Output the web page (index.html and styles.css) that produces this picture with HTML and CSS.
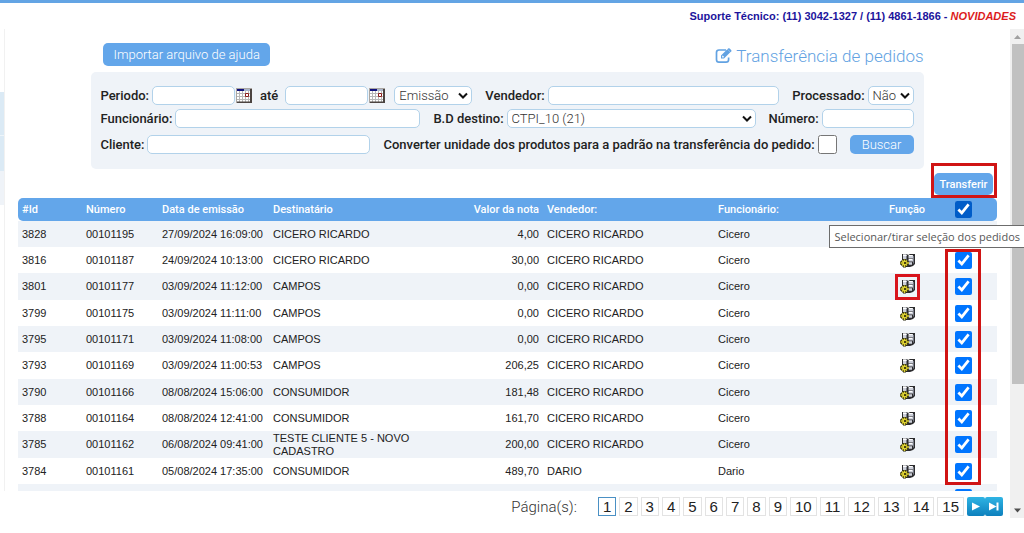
FILE: index.html
```html
<!DOCTYPE html>
<html lang="pt-BR">
<head>
<meta charset="utf-8">
<title>Transferência de pedidos</title>
<link rel="stylesheet" href="styles.css">
</head>
<body>
<svg class="sprite" aria-hidden="true">
  <symbol id="i-cal" viewBox="0 0 16 15">
    <path fill="#fff" d="M0 0h16v15H0z"/>
    <path fill="#aaa6a2" d="M0 0h1v15H0zM0 0h16v1H0z"/>
    <path fill="#10107c" d="M1 1h7v2H1z"/>
    <path fill="#a9b4c8" d="M8 1h6v2H8z"/>
    <path stroke="#b8b8b8" fill="none" d="M1 5.500h13M1 8.500h13M1 11.500h13M3.500 3v11M6.500 3v11M9.500 3v11M12.500 3v11"/>
    <path stroke="#8c1c1c" fill="#fff" d="M9.500 5.500h3v3h-3z"/>
    <path fill="#4b4441" d="M14 1h2v14H1v-1.500h13z"/>
  </symbol>
  <symbol id="i-fn" viewBox="0 0 15 15">
    <path fill="#2c2c2e" d="M2 1h5l1 1 2-1h5v10l-2 2-3 1H5L2 9z"/>
    <path fill="#cdd0da" d="M3 1.500h4V7H3zM8.500 2H13v3.500H8.500zM8.500 6H13v2.500H8.500zM8.500 9.200H12v2.500H8.500z"/>
    <path fill="#fff" d="M3 1.500h3v1.500H3zM9 2h3.500v1H9zM9 6h3v1H9z"/>
    <path fill="#777b86" d="M13 3h1v7l-1 1zM6 3h1v4H6z"/>
    <path stroke="#2a2810" stroke-width="3" d="M4.500 6v8.500M0 10h9M1.800 7.200l5.500 5.500M7.200 7.200l-5.500 5.500"/>
    <path stroke="#e0d432" stroke-width="1.500" d="M4.500 6.500v7.500M.5 10h8.500M2 7.500l5 5M7 7.500l-5 5"/>
    <path fill="#4a430c" d="M4 9h2v2H4z"/>
  </symbol>
</svg>

<header class="topbar">
  <strong>Suporte Técnico: (11) 3042-1327 / (11) 4861-1866 - <a class="news" href="#">NOVIDADES</a></strong>
</header>

<div class="shell">
  <aside class="rail"><div class="rail-a"></div><div class="rail-b"></div><div class="rail-c"></div></aside>

  <div class="center">
    <main class="content">
      <div class="panel-area">
        <div class="heading">
          <button class="btn btn-import" type="button">Importar arquivo de ajuda</button>
          <h1 class="title">
            <svg class="edit" viewBox="0 0 18 16" aria-hidden="true">
              <path fill="none" stroke="currentColor" stroke-width="1.700" d="M11 2H4Q1.500 2 1.500 4.500v7Q1.500 14.200 4 14.200h7q2.600 0 2.600-2.700V9.500"/>
              <path fill="currentColor" fill-rule="evenodd" d="M6 7.500 12.300 1.200l3 3L9 10.500H6zM7.200 8v1.400h1.300l.5-.6L7.700 7.500zM13 .6q.8-.9 1.700 0l1.400 1.400q.8.800 0 1.700l-.5.500-3-3z"/>
            </svg>Transferência de pedidos
          </h1>
        </div>

        <form class="filters">
          <div class="line">
            <div class="field">
              <label for="de">Periodo:</label><input class="box date" id="de" type="text">
              <button class="cal" type="button" aria-label="Data inicial"><svg><use href="#i-cal"/></svg></button>
            </div>
            <div class="field until">
              <label for="ate">até</label><input class="box date" id="ate" type="text">
              <button class="cal" type="button" aria-label="Data final"><svg><use href="#i-cal"/></svg></button>
            </div>
            <span class="pick pick-tipo"><select class="box" aria-label="Tipo de data"><option>Emissão</option></select><svg class="chev" viewBox="0 0 10 6"><path d="M1 1l4 4 4-4"/></svg></span>
            <div class="field grow"><label for="vend">Vendedor:</label><input class="box" id="vend" type="text"></div>
            <div class="field"><label for="proc">Processado:</label><span class="pick pick-proc"><select class="box" id="proc"><option>Não</option></select><svg class="chev" viewBox="0 0 10 6"><path d="M1 1l4 4 4-4"/></svg></span></div>
          </div>
          <div class="line">
            <div class="field grow"><label for="func">Funcionário:</label><input class="box" id="func" type="text"></div>
            <div class="field"><label for="bd">B.D destino:</label><span class="pick pick-bd"><select class="box" id="bd"><option>CTPI_10 (21)</option></select><svg class="chev" viewBox="0 0 10 6"><path d="M1 1l4 4 4-4"/></svg></span></div>
            <div class="field"><label for="num">Número:</label><input class="box num" id="num" type="text"></div>
          </div>
          <div class="line">
            <div class="field grow"><label for="cli">Cliente:</label><input class="box" id="cli" type="text"></div>
            <div class="field"><label for="conv">Converter unidade dos produtos para a padrão na transferência do pedido:</label><input class="conv" id="conv" type="checkbox"></div>
            <button class="btn btn-search" type="button">Buscar</button>
          </div>
        </form>
      </div>

      <div class="actions"><div class="mark-frame"><button class="btn btn-transfer" type="button">Transferir</button></div></div>

      <div class="list">
        <table class="orders">
          <colgroup><col class="c-id"><col class="c-num"><col class="c-date"><col><col class="c-val"><col class="c-vend"><col class="c-func"><col class="c-fn"><col class="c-chk"></colgroup>
          <thead>
            <tr><th>#Id</th><th>Número</th><th>Data de emissão</th><th>Destinatário</th><th class="right">Valor da nota</th><th>Vendedor:</th><th>Funcionário:</th><th class="mid">Função</th><th class="mid"><input class="chk all" type="checkbox" checked aria-label="Selecionar todos"></th></tr>
          </thead>
          <tbody>
            <tr><td>3828</td><td>00101195</td><td>27/09/2024 16:09:00</td><td>CICERO RICARDO</td><td class="right">4,00</td><td>CICERO RICARDO</td><td>Cicero</td><td class="mid"><button class="fn" type="button" aria-label="Função"><svg><use href="#i-fn"/></svg></button></td><td class="mid"><input class="chk" type="checkbox" checked aria-label="Pedido 3828"></td></tr>
            <tr><td>3816</td><td>00101187</td><td>24/09/2024 10:13:00</td><td>CICERO RICARDO</td><td class="right">30,00</td><td>CICERO RICARDO</td><td>Cicero</td><td class="mid"><button class="fn" type="button" aria-label="Função"><svg><use href="#i-fn"/></svg></button></td><td class="mid"><input class="chk" type="checkbox" checked aria-label="Pedido 3816"></td></tr>
            <tr><td>3801</td><td>00101177</td><td>03/09/2024 11:12:00</td><td>CAMPOS</td><td class="right">0,00</td><td>CICERO RICARDO</td><td>Cicero</td><td class="mid"><button class="fn fn-marked" type="button" aria-label="Função"><svg><use href="#i-fn"/></svg></button></td><td class="mid"><input class="chk" type="checkbox" checked aria-label="Pedido 3801"></td></tr>
            <tr><td>3799</td><td>00101175</td><td>03/09/2024 11:11:00</td><td>CAMPOS</td><td class="right">0,00</td><td>CICERO RICARDO</td><td>Cicero</td><td class="mid"><button class="fn" type="button" aria-label="Função"><svg><use href="#i-fn"/></svg></button></td><td class="mid"><input class="chk" type="checkbox" checked aria-label="Pedido 3799"></td></tr>
            <tr><td>3795</td><td>00101171</td><td>03/09/2024 11:08:00</td><td>CAMPOS</td><td class="right">0,00</td><td>CICERO RICARDO</td><td>Cicero</td><td class="mid"><button class="fn" type="button" aria-label="Função"><svg><use href="#i-fn"/></svg></button></td><td class="mid"><input class="chk" type="checkbox" checked aria-label="Pedido 3795"></td></tr>
            <tr><td>3793</td><td>00101169</td><td>03/09/2024 11:00:53</td><td>CAMPOS</td><td class="right">206,25</td><td>CICERO RICARDO</td><td>Cicero</td><td class="mid"><button class="fn" type="button" aria-label="Função"><svg><use href="#i-fn"/></svg></button></td><td class="mid"><input class="chk" type="checkbox" checked aria-label="Pedido 3793"></td></tr>
            <tr><td>3790</td><td>00101166</td><td>08/08/2024 15:06:00</td><td>CONSUMIDOR</td><td class="right">181,48</td><td>CICERO RICARDO</td><td>Cicero</td><td class="mid"><button class="fn" type="button" aria-label="Função"><svg><use href="#i-fn"/></svg></button></td><td class="mid"><input class="chk" type="checkbox" checked aria-label="Pedido 3790"></td></tr>
            <tr><td>3788</td><td>00101164</td><td>08/08/2024 12:41:00</td><td>CONSUMIDOR</td><td class="right">161,70</td><td>CICERO RICARDO</td><td>Cicero</td><td class="mid"><button class="fn" type="button" aria-label="Função"><svg><use href="#i-fn"/></svg></button></td><td class="mid"><input class="chk" type="checkbox" checked aria-label="Pedido 3788"></td></tr>
            <tr><td>3785</td><td>00101162</td><td>06/08/2024 09:41:00</td><td>TESTE CLIENTE 5 - NOVO CADASTRO</td><td class="right">200,00</td><td>CICERO RICARDO</td><td>Cicero</td><td class="mid"><button class="fn" type="button" aria-label="Função"><svg><use href="#i-fn"/></svg></button></td><td class="mid"><input class="chk" type="checkbox" checked aria-label="Pedido 3785"></td></tr>
            <tr><td>3784</td><td>00101161</td><td>05/08/2024 17:35:00</td><td>CONSUMIDOR</td><td class="right">489,70</td><td>DARIO</td><td>Dario</td><td class="mid"><button class="fn" type="button" aria-label="Função"><svg><use href="#i-fn"/></svg></button></td><td class="mid"><input class="chk" type="checkbox" checked aria-label="Pedido 3784"></td></tr>
            <tr><td></td><td></td><td></td><td></td><td></td><td></td><td></td><td class="mid"><button class="fn" type="button" aria-label="Função"><svg><use href="#i-fn"/></svg></button></td><td class="mid"><input class="chk" type="checkbox" checked aria-label="Próximo pedido"></td></tr>
          </tbody>
        </table>
        <div class="mark-column"></div>
        <div class="tip" role="tooltip">Selecionar/tirar seleção dos pedidos</div>
      </div>
    </main>

    <nav class="pager" aria-label="Páginas">
      <span class="pager-label">Página(s):</span>
      <a class="page current" href="#">1</a><a class="page" href="#">2</a><a class="page" href="#">3</a><a class="page" href="#">4</a><a class="page" href="#">5</a><a class="page" href="#">6</a><a class="page" href="#">7</a><a class="page" href="#">8</a><a class="page" href="#">9</a><a class="page" href="#">10</a><a class="page" href="#">11</a><a class="page" href="#">12</a><a class="page" href="#">13</a><a class="page" href="#">14</a><a class="page" href="#">15</a>
      <span class="jumps">
        <a class="jump" href="#" aria-label="Próxima"><svg viewBox="0 0 18 19"><path d="M5 5.500l8 4-8 4z"/></svg></a>
        <a class="jump" href="#" aria-label="Última"><svg viewBox="0 0 18 19"><path d="M4 5.500l7.500 4-7.500 4zM11.500 5.500h2v8h-2z"/></svg></a>
      </span>
    </nav>
  </div>

  <div class="scroll" aria-hidden="true">
    <svg viewBox="0 0 14 15"><path fill="#a0a0a0" d="M4 10l3.500-4 3.500 4z"/></svg>
    <div class="track"><div class="thumb"></div></div>
    <svg viewBox="0 0 14 15"><path fill="#4d4d4d" d="M4 5.500h7l-3.500 4z"/></svg>
  </div>
</div>
</body>
</html>
```

FILE: styles.css
```css
* { box-sizing: border-box; }

body {
  margin: 0;
  height: 100vh;
  display: flex;
  flex-direction: column;
  overflow: hidden;
  background: #fff;
  font-family: Roboto, "Liberation Sans", sans-serif;
  font-size: 13px;
  color: #222;
}

button, input, select { font: inherit; margin: 0; }
button { padding: 0; border: 0; background: none; }
.sprite { position: absolute; width: 0; height: 0; }

.topbar {
  border-top: 3px solid #63a4e4;
  height: 29px;
  padding: 6px 8px 0 0;
  text-align: right;
  font: 11px/14px "Liberation Sans", sans-serif;
  color: #1c149c;
}
.news { color: #dc1c1c; font-style: italic; text-decoration: none; }

.shell { flex: 1; min-height: 0; display: flex; }

.rail {
  width: 5px;
  margin: 0 0 42px;
  padding-top: 63px;
  border-right: 1px solid #f1f1f1;
}
.rail-a { height: 44px; background: #dbeaf5; border-bottom: 1px solid #eef5fa; }
.rail-b { height: 35px; background: #dbeaf5; }
.rail-c { height: 34px; background: #eff3f8; }

.center { flex: 1; min-width: 0; display: flex; flex-direction: column; }
.content { flex: 1; min-height: 0; padding: 14px 13px 0; clip-path: inset(0 -14px 0 0); }

.panel-area { width: 85%; margin: 0 auto; }
.heading { display: flex; justify-content: space-between; align-items: center; height: 23px; padding-left: 12px; }
.title {
  display: flex;
  align-items: center;
  gap: 3px;
  margin: 0;
  padding-top: 3px;
  font-size: 17px;
  font-weight: 300;
  color: #62a2e2;
}
.edit { width: 18px; height: 16px; }

.btn {
  background: #63a6ea;
  color: #fff;
  border-radius: 5px;
  font-weight: 300;
  text-align: center;
}
.btn-import { padding: 0 10px; height: 23px; }
.btn-search { width: 64px; height: 19px; }
.btn-transfer { width: 59px; height: 22px; font-size: 11px; font-weight: 500; }

.filters {
  margin-top: 6px;
  padding: 14px 10px 15px 9px;
  border-radius: 5px;
  background: #eff3f8;
  display: flex;
  flex-direction: column;
  gap: 4px;
}
.line { display: flex; align-items: center; gap: 13px; height: 19px; }
.line:last-child { height: 20px; margin-top: 2px; }
.field { display: flex; align-items: center; gap: 3px; }
.field label { font-weight: 500; white-space: nowrap; }
.grow { flex: 1; }
.grow .box { flex: 1; min-width: 0; }
.until { margin-left: -5px; margin-right: -4px; }
.until .date { margin-left: 4px; }
.box {
  height: 19px;
  padding: 0 4px;
  border: 1px solid #b2d2ea;
  border-radius: 5px;
  background: #fff;
}
.date { width: 83px; }
.num { width: 92px; }
.cal { width: 16px; height: 15px; margin-left: -2px; }
.cal svg { display: block; width: 16px; height: 15px; }
.pick { position: relative; display: block; }
.pick .box { appearance: none; display: block; width: 100%; font-weight: 300; color: #333; line-height: 17px; }
.chev { position: absolute; right: 4px; top: 6px; width: 10px; height: 7px; pointer-events: none; }
.chev path { fill: none; stroke: #111; stroke-width: 2; }
.pick-tipo { width: 78px; }
.pick-proc { width: 46px; }
.pick-bd { width: 249px; }
.conv { width: 19px; height: 19px; }

.actions { display: flex; justify-content: flex-end; margin-top: -6px; }
.mark-frame { padding: 7px 1px 0 0; border: 3px solid #d01414; }
.mark-frame .btn { display: block; }

.list { position: relative; }
.orders {
  width: 100%;
  table-layout: fixed;
  border-collapse: separate;
  border-spacing: 0;
  font: 11px/13px "Liberation Sans", sans-serif;
}
.c-id { width: 64px; }
.c-num { width: 76px; }
.c-date { width: 111px; }
.c-val { width: 114px; }
.c-vend { width: 171px; }
.c-func { width: 171px; }
.c-fn { width: 44px; }
.c-chk { width: 68px; }
.orders th {
  height: 23px;
  padding: 0 4px;
  background: #63a6ea;
  color: #fff;
  font: 500 11px/13px Roboto, sans-serif;
  text-align: left;
  white-space: nowrap;
}
.orders th:first-child { border-radius: 5px 0 0 5px; }
.orders th:last-child { border-radius: 0 5px 5px 0; }
.orders td { height: 26px; padding: 0 4px; }
.orders tr:nth-child(3n) td { height: 27px; }
.orders tbody tr:nth-child(odd) td { background: #eff3f8; }
.orders .right { text-align: right; }
.orders .mid { text-align: center; padding: 0; }
.chk { display: block; width: 17px; height: 17px; margin: 0 auto; accent-color: #0075ff; }
.all { accent-color: #005cc8; }
.fn { display: block; width: 25px; height: 26px; margin: 0 auto; padding: 5px; }
.fn svg { display: block; width: 15px; height: 15px; }
.fn-marked { padding: 2px; border: 3px solid #d8141c; }

.mark-column {
  position: absolute;
  top: 51px;
  right: 16px;
  width: 36px;
  height: 236px;
  border: 3px solid #d01414;
  pointer-events: none;
}
.tip {
  position: absolute;
  top: 27px;
  right: -27px;
  padding: 0 4px;
  border: 1px solid #6c6c6c;
  border-right: 0;
  background: #fff;
  color: #575757;
  font: 11px/21px "Open Sans", sans-serif;
  white-space: nowrap;
  z-index: 2;
}

.pager {
  height: 42px;
  padding: 6px 7px 0 0;
  display: flex;
  justify-content: flex-end;
  align-items: flex-start;
  gap: 3px;
}
.pager-label { margin-right: 18px; font-size: 15px; line-height: 20px; font-weight: 300; color: #333; }
.page {
  padding: 0 4px;
  border: 1px solid #e3e3e3;
  font: 15px/17px "Liberation Sans", sans-serif;
  color: #222;
  text-decoration: none;
}
.current { border-color: #4a90c4; }
.jumps { display: flex; }
.jump { border-radius: 2px; background: linear-gradient(#2fb4e4, #0d80bd); }
.jump svg { display: block; width: 18px; height: 19px; fill: #fff; }

.scroll { width: 14px; margin-bottom: 15px; display: flex; flex-direction: column; background: #f0f0f0; }
.scroll > svg { display: block; width: 14px; height: 15px; }
.track { flex: 1; padding-left: 2px; }
.thumb { height: 74%; background: #c1c1c1; }
```
